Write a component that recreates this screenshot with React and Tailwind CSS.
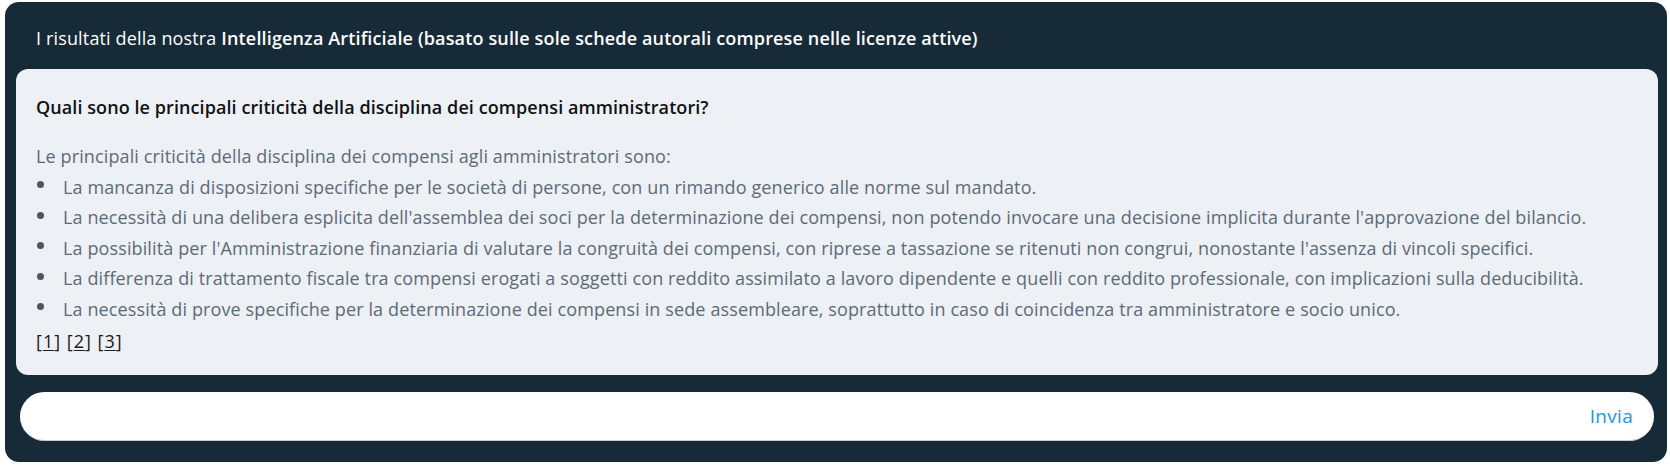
export default function App() {
  const items = [
    "La mancanza di disposizioni specifiche per le società di persone, con un rimando generico alle norme sul mandato.",
    "La necessità di una delibera esplicita dell'assemblea dei soci per la determinazione dei compensi, non potendo invocare una decisione implicita durante l'approvazione del bilancio.",
    "La possibilità per l'Amministrazione finanziaria di valutare la congruità dei compensi, con riprese a tassazione se ritenuti non congrui, nonostante l'assenza di vincoli specifici.",
    "La differenza di trattamento fiscale tra compensi erogati a soggetti con reddito assimilato a lavoro dipendente e quelli con reddito professionale, con implicazioni sulla deducibilità.",
    "La necessità di prove specifiche per la determinazione dei compensi in sede assembleare, soprattutto in caso di coincidenza tra amministratore e socio unico.",
  ];
  return (
    <div className="w-[1670px] h-[466px] bg-white pt-[2px] pl-[5px] pr-[3px]" style={{ fontFamily: '"Open Sans", sans-serif' }}>
      <div className="bg-[#172a37] rounded-[14px] h-[460px] flex flex-col px-[11px] pr-[9px]">
        <div className="h-[67px] flex items-center pt-[6px] pl-[20px] text-white text-[18px] tracking-[0.15px]">
          <span>
            I risultati della nostra <b className="font-semibold">Intelligenza Artificiale (basato sulle sole schede autorali comprese nelle licenze attive)</b>
          </span>
        </div>
        <div className="bg-[#edf0f5] rounded-[12px] h-[306px] pl-[20px] pt-[26px]">
          <div className="text-[18px] font-semibold text-[#111] leading-[24px] tracking-[0.08px]">
            Quali sono le principali criticità della disciplina dei compensi amministratori?
          </div>
          <div className="mt-[22px] text-[18px] text-[#5c6b79] leading-[30.5px] tracking-[0.12px]">
            <div>Le principali criticità della disciplina dei compensi agli amministratori sono:</div>
            <ul>
              {items.map((t, i) => (
                <li key={i} className="flex items-center">
                  <span className="w-[7px] h-[7px] rounded-full bg-[#4a5661] ml-[1px] mr-[19px] shrink-0 -translate-y-[2px]" />
                  <span>{t}</span>
                </li>
              ))}
            </ul>
            <div className="mt-[2px] text-[#1b1b1b] tracking-[1px]">
              [<span className="underline underline-offset-2">1</span>] [<span className="underline underline-offset-2">2</span>] [<span className="underline underline-offset-2">3</span>]
            </div>
          </div>
        </div>
        <div className="mt-[17px] mx-[4px] h-[49px] bg-white rounded-full flex items-center justify-end pr-[21px] border-b border-[#c9ced4]">
          <span className="text-[#2196dc] text-[19px] tracking-[0.3px]">Invia</span>
        </div>
      </div>
    </div>
  );
}
